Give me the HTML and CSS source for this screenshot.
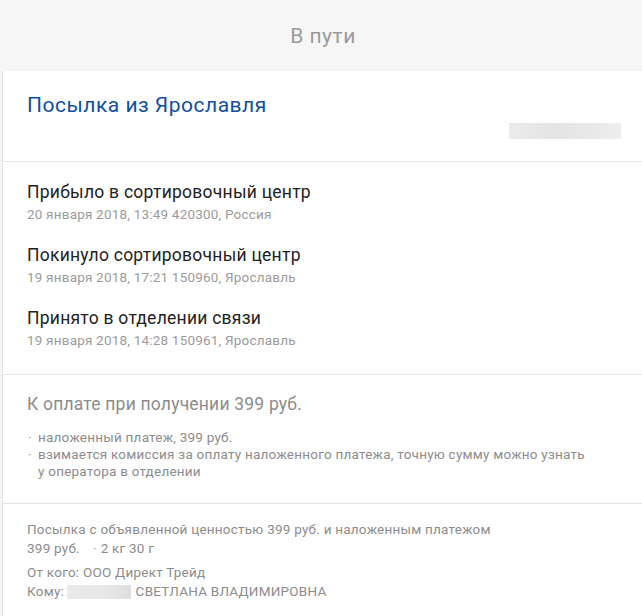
FILE: index.html
```html
<!DOCTYPE html>
<html lang="ru">
<head>
<meta charset="utf-8">
<title>В пути</title>
<link rel="stylesheet" href="styles.css">
</head>
<body>
<header class="top">В пути</header>
<main class="card">
  <section class="head">
    <h1 class="title">Посылка из Ярославля</h1>
    <div class="track-row"><span class="blur blur-track"></span></div>
  </section>
  <section class="events">
    <div class="event">
      <div class="ev-title">Прибыло в сортировочный центр</div>
      <div class="ev-sub">20 января 2018, 13:49 420300, Россия</div>
    </div>
    <div class="event">
      <div class="ev-title">Покинуло сортировочный центр</div>
      <div class="ev-sub">19 января 2018, 17:21 150960, Ярославль</div>
    </div>
    <div class="event">
      <div class="ev-title">Принято в отделении связи</div>
      <div class="ev-sub">19 января 2018, 14:28 150961, Ярославль</div>
    </div>
  </section>
  <section class="pay">
    <div class="pay-title">К оплате при получении 399 руб.</div>
    <ul class="pay-list">
      <li>наложенный платеж, 399 руб.</li>
      <li>взимается комиссия за оплату наложенного платежа, точную сумму можно узнать<br>у оператора в отделении</li>
    </ul>
  </section>
  <section class="info">
    <p class="info-p">Посылка с объявленной ценностью 399 руб. и наложенным платежом<br>399 руб.<span class="dot">·</span>2 кг 30 г</p>
    <p class="info-p">От кого: ООО Директ Трейд<br>Кому:<span class="blur blur-name"></span> СВЕТЛАНА ВЛАДИМИРОВНА</p>
  </section>
</main>
</body>
</html>
```

FILE: styles.css
```css
html, body {
  margin: 0;
  padding: 0;
}
body {
  background: #f6f6f6;
  font-family: Roboto, "Noto Sans", Arial, sans-serif;
  color: #333;
  width: 642px;
  height: 616px;
  overflow: hidden;
}
.top {
  height: 71px;
  display: flex;
  align-items: center;
  justify-content: center;
  font-size: 21px;
  letter-spacing: 0.5px;
  color: #9a9a9a;
  padding-left: 4px;
}
.card {
  margin-left: 2px;
  background: #fff;
  border-left: 1px solid #e4e4e4;
  min-height: 545px;
}
.head {
  padding: 21px 21px 22px 24px;
  border-bottom: 1px solid #e5e5e5;
}
.title {
  margin: 0;
  font-size: 21px;
  font-weight: 400;
  line-height: 26px;
  letter-spacing: 0.5px;
  color: #0f4f9e;
}
.track-row {
  display: flex;
  justify-content: flex-end;
  margin-top: 5px;
}
.blur {
  display: inline-block;
  background: linear-gradient(90deg, #ebebeb, #e4e4e4 40%, #e8e8e8 70%, #eceeed);
}
.blur-track {
  width: 112px;
  height: 16px;
}
.events {
  padding: 18px 21px 24px 24px;
  border-bottom: 1px solid #e5e5e5;
  display: flex;
  flex-direction: column;
  gap: 19px;
}
.ev-title {
  font-size: 17.5px;
  line-height: 24px;
  letter-spacing: 0.25px;
  color: #222;
}
.ev-sub {
  font-size: 13.5px;
  line-height: 20px;
  letter-spacing: 0.2px;
  color: #9b9b9b;
}
.pay {
  padding: 17px 21px 23px 24px;
  border-bottom: 1px solid #e5e5e5;
  color: #8c8c8c;
}
.pay-title {
  font-size: 17.5px;
  line-height: 24px;
  letter-spacing: 0.2px;
}
.pay-list {
  list-style: none;
  margin: 13px 0 0;
  padding: 0 0 0 11px;
  font-size: 13.5px;
  line-height: 17px;
  letter-spacing: 0.23px;
}
.pay-list li {
  position: relative;
}
.pay-list li::before {
  content: "·";
  position: absolute;
  left: -10px;
  top: 0;
  color: #999;
}
.info {
  padding: 16px 21px 20px 24px;
  font-size: 13.5px;
  line-height: 18.5px;
  letter-spacing: 0.23px;
  color: #8c8c8c;
}
.info-p {
  margin: 0 0 6px;
}
.dot {
  margin: 0 4px 0 13px;
  color: #999;
}
.blur-name {
  width: 64px;
  height: 14px;
  margin: 0 1px 0 3px;
  vertical-align: -3px;
  background: linear-gradient(90deg, #e9e9e9, #e7e7e7 60%, #dedede);
}
```
